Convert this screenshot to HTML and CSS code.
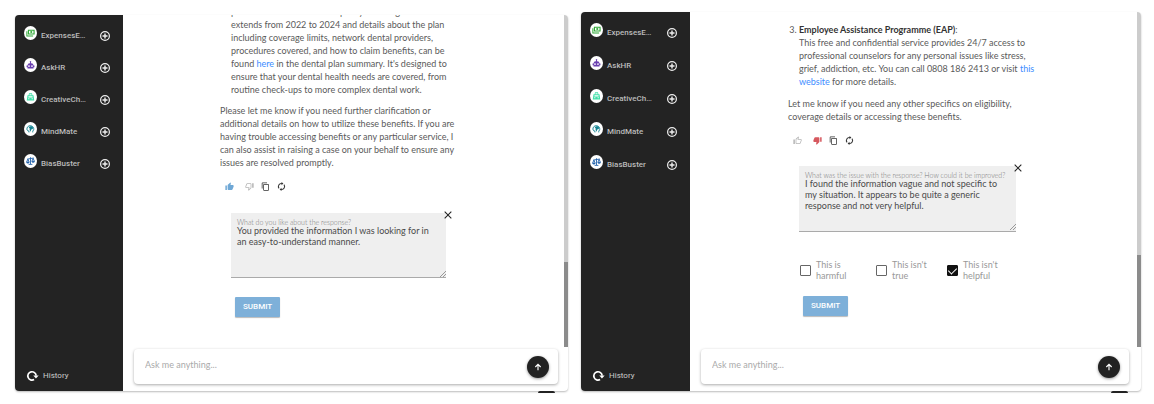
FILE: index.html
```html
<!DOCTYPE html>
<html lang="en">
<head>
<meta charset="utf-8">
<title>Assistant feedback</title>
<link rel="stylesheet" href="styles.css">
</head>
<body>
<svg class="defs" aria-hidden="true">
  <symbol id="plus" viewBox="0 0 24 24"><circle cx="12" cy="12" r="10.500" fill="none" stroke="currentColor" stroke-width="3"/><path d="M12 6v12M6 12h12" stroke="currentColor" stroke-width="3.400"/></symbol>
  <symbol id="cash" viewBox="0 0 24 24"><path fill="#2fa836" fill-rule="evenodd" d="M5 3h18v13H5zM8 6v7h12V6zM1 7h2.500v11.500H19V21H1z"/><circle cx="14" cy="9.500" r="2.800" fill="#2fa836"/></symbol>
  <symbol id="robot" viewBox="0 0 24 24"><path fill="#6a3fb0" fill-rule="evenodd" d="M12 1.500a2 2 0 0 1 1.200 3.600V7H14a6 6 0 0 1 6 6h2.500v5H20v3H4v-3H1.500v-5H4a6 6 0 0 1 6-6h.8V5.100A2 2 0 0 1 12 1.500zM8 12.500a2.400 2.400 0 1 0 0 4.800 2.400 2.400 0 0 0 0-4.800zm8 0a2.400 2.400 0 1 0 0 4.800 2.400 2.400 0 0 0 0-4.800z"/></symbol>
  <symbol id="creative" viewBox="0 0 24 24"><path fill="#3fe0a8" fill-rule="evenodd" d="M8 2h8l1 5h3l2 14H2L4 7h3zM9.500 4.500 9 7h6l-.5-2.500zM6.500 10v3h11v-3zM6 15.500V18h3v-2.500zm9 0V18h3v-2.500z"/></symbol>
  <symbol id="mind" viewBox="0 0 24 24"><path fill="none" stroke="#168492" stroke-width="2.600" d="M8 21v-3C3 17 1.500 13 3 9c1.600-5 7-7 12-5 5 2 6 6 5.500 9.500L18 18v3"/><path fill="#168492" d="M9 6l5-2 5 4-1 4-4 1-2 6-3-5 2-3-4-2z"/></symbol>
  <symbol id="scale" viewBox="0 0 24 24"><path fill="none" stroke="#2463ac" stroke-width="2.400" d="M12 2v18M7 21h10M3 7l18-3M5 7l-3.500 8h7zM19 5l-3.500 8h7z"/><path fill="#2463ac" d="M1 14.500h8a4 4 0 0 1-8 0zM15 12.500h8a4 4 0 0 1-8 0z"/></symbol>
  <symbol id="up" viewBox="0 0 24 24"><path fill="currentColor" d="M1 21h4V9H1v12zm22-11c0-1.100-.9-2-2-2h-6.310l.95-4.570.03-.32c0-.41-.17-.79-.44-1.060L14.170 1 7.590 7.590C7.220 7.950 7 8.450 7 9v10c0 1.100.9 2 2 2h9c.83 0 1.540-.5 1.840-1.220l3.020-7.050c.09-.23.14-.47.14-.73v-2z"/></symbol>
  <symbol id="up-line" viewBox="0 0 24 24"><path fill="currentColor" d="M9 21h9c.83 0 1.540-.5 1.840-1.220l3.020-7.050c.09-.23.14-.47.14-.73v-2c0-1.100-.9-2-2-2h-6.310l.95-4.570.03-.32c0-.41-.17-.79-.44-1.060L14.170 1 7.580 7.590C7.220 7.950 7 8.450 7 9v10c0 1.100.9 2 2 2zM9 9l4.340-4.340L12 10h9v2l-3 7H9V9zM1 9h4v12H1z"/></symbol>
  <symbol id="copy" viewBox="0 0 24 24"><path fill="currentColor" d="M16 1H4c-1.100 0-2 .9-2 2v14h2V3h12V1zm3 4H8c-1.100 0-2 .9-2 2v14c0 1.100.9 2 2 2h11c1.100 0 2-.9 2-2V7c0-1.100-.9-2-2-2zm0 16H8V7h11v14z"/></symbol>
  <symbol id="sync" viewBox="0 0 24 24"><path fill="none" stroke="currentColor" stroke-width="2.800" d="M5.500 17A8 8 0 0 1 13 4.100M18.500 7A8 8 0 0 1 11 19.900"/><path fill="currentColor" d="M12 0l5 4.200-5 4.300zM12 24l-5-4.200 5-4.300z"/></symbol>
  <symbol id="cross" viewBox="0 0 24 24"><path d="M2 2l20 20M22 2L2 22" stroke="currentColor" stroke-width="3.200"/></symbol>
  <symbol id="arrow" viewBox="0 0 24 24"><path d="M12 22V4M4 12L12 4 20 12" fill="none" stroke="currentColor" stroke-width="3.400"/></symbol>
  <symbol id="history" viewBox="0 0 24 24"><path d="M17 20.500A10 10 0 1 1 22 11" fill="none" stroke="currentColor" stroke-width="4"/><path d="M15 11H28l-6.500 7z" fill="currentColor"/></symbol>
</svg>

<main class="screens">
  <section class="panel panel-liked">
    <nav class="sidebar">
      <ul class="bots">
        <li class="bot"><span class="avatar"><svg><use href="#cash"/></svg></span><a class="bot-name" href="#">ExpensesE…</a><button class="add" aria-label="New ExpensesE chat"><svg><use href="#plus"/></svg></button></li>
        <li class="bot"><span class="avatar"><svg><use href="#robot"/></svg></span><a class="bot-name" href="#">AskHR</a><button class="add" aria-label="New AskHR chat"><svg><use href="#plus"/></svg></button></li>
        <li class="bot"><span class="avatar"><svg><use href="#creative"/></svg></span><a class="bot-name" href="#">CreativeCh…</a><button class="add" aria-label="New CreativeCh chat"><svg><use href="#plus"/></svg></button></li>
        <li class="bot"><span class="avatar"><svg><use href="#mind"/></svg></span><a class="bot-name" href="#">MindMate</a><button class="add" aria-label="New MindMate chat"><svg><use href="#plus"/></svg></button></li>
        <li class="bot"><span class="avatar"><svg><use href="#scale"/></svg></span><a class="bot-name" href="#">BiasBuster</a><button class="add" aria-label="New BiasBuster chat"><svg><use href="#plus"/></svg></button></li>
      </ul>
      <a class="history" href="#"><svg><use href="#history"/></svg>History</a>
    </nav>
    <div class="chat">
      <div class="viewport">
        <div class="thread">
          <p class="item">provided for all staff on the policy. Coverage<br>extends from 2022 to 2024 and details about the plan<br>including coverage limits, network dental providers,<br>procedures covered, and how to claim benefits, can be<br>found <a href="#">here</a> in the dental plan summary. It's designed to<br>ensure that your dental health needs are covered, from<br>routine check-ups to more complex dental work.</p>
          <p class="para">Please let me know if you need further clarification or<br>additional details on how to utilize these benefits. If you are<br>having trouble accessing benefits or any particular service, I<br>can also assist in raising a case on your behalf to ensure any<br>issues are resolved promptly.</p>
          <div class="actions">
            <button class="act liked" aria-label="Like"><svg><use href="#up"/></svg></button>
            <button class="act faint down" aria-label="Dislike"><svg><use href="#up-line"/></svg></button>
            <button class="act" aria-label="Copy"><svg><use href="#copy"/></svg></button>
            <button class="act" aria-label="Regenerate"><svg><use href="#sync"/></svg></button>
          </div>
          <form class="feedback">
            <div class="field">
              <label for="liked-text">What do you like about the response?</label>
              <textarea id="liked-text">You provided the information I was looking for in
an easy-to-understand manner.</textarea>
              <button type="button" class="close" aria-label="Close"><svg><use href="#cross"/></svg></button>
            </div>
            <button type="button" class="submit">SUBMIT</button>
          </form>
        </div>
        <div class="track"><div class="thumb"></div></div>
      </div>
      <form class="composer">
        <input type="text" aria-label="Message" placeholder="Ask me anything...">
        <button type="button" class="send" aria-label="Send"><svg><use href="#arrow"/></svg></button>
      </form>
    </div>
    <span class="tab"></span>
  </section>

  <section class="panel panel-disliked">
    <nav class="sidebar">
      <ul class="bots">
        <li class="bot"><span class="avatar"><svg><use href="#cash"/></svg></span><a class="bot-name" href="#">ExpensesE…</a><button class="add" aria-label="New ExpensesE chat"><svg><use href="#plus"/></svg></button></li>
        <li class="bot"><span class="avatar"><svg><use href="#robot"/></svg></span><a class="bot-name" href="#">AskHR</a><button class="add" aria-label="New AskHR chat"><svg><use href="#plus"/></svg></button></li>
        <li class="bot"><span class="avatar"><svg><use href="#creative"/></svg></span><a class="bot-name" href="#">CreativeCh…</a><button class="add" aria-label="New CreativeCh chat"><svg><use href="#plus"/></svg></button></li>
        <li class="bot"><span class="avatar"><svg><use href="#mind"/></svg></span><a class="bot-name" href="#">MindMate</a><button class="add" aria-label="New MindMate chat"><svg><use href="#plus"/></svg></button></li>
        <li class="bot"><span class="avatar"><svg><use href="#scale"/></svg></span><a class="bot-name" href="#">BiasBuster</a><button class="add" aria-label="New BiasBuster chat"><svg><use href="#plus"/></svg></button></li>
      </ul>
      <a class="history" href="#"><svg><use href="#history"/></svg>History</a>
    </nav>
    <div class="chat">
      <div class="viewport">
        <div class="thread">
          <ol class="item list" start="3"><li><strong>Employee Assistance Programme (EAP)</strong>:<br>This free and confidential service provides 24/7 access to<br>professional counselors for any personal issues like stress,<br>grief, addiction, etc. You can call 0808 186 2413 or visit <a href="#">this<br>website</a> for more details.</li></ol>
          <p class="para">Let me know if you need any other specifics on eligibility,<br>coverage details or accessing these benefits.</p>
          <div class="actions">
            <button class="act faint" aria-label="Like"><svg><use href="#up-line"/></svg></button>
            <button class="act disliked down" aria-label="Dislike"><svg><use href="#up"/></svg></button>
            <button class="act" aria-label="Copy"><svg><use href="#copy"/></svg></button>
            <button class="act" aria-label="Regenerate"><svg><use href="#sync"/></svg></button>
          </div>
          <form class="feedback">
            <div class="field">
              <label for="issue-text">What was the issue with the response? How could it be improved?</label>
              <textarea id="issue-text">I found the information vague and not specific to
my situation. It appears to be quite a generic
response and not very helpful.</textarea>
              <button type="button" class="close" aria-label="Close"><svg><use href="#cross"/></svg></button>
            </div>
            <div class="reasons">
              <label class="reason"><input type="checkbox"><span>This is<br>harmful</span></label>
              <label class="reason"><input type="checkbox"><span>This isn't<br>true</span></label>
              <label class="reason"><input type="checkbox" checked><span>This isn't<br>helpful</span></label>
            </div>
            <button type="button" class="submit">SUBMIT</button>
          </form>
        </div>
        <div class="track"><div class="thumb"></div></div>
      </div>
      <form class="composer">
        <input type="text" aria-label="Message" placeholder="Ask me anything...">
        <button type="button" class="send" aria-label="Send"><svg><use href="#arrow"/></svg></button>
      </form>
    </div>
    <span class="tab"></span>
  </section>
</main>
</body>
</html>
```
FILE: styles.css
```css
* { box-sizing: border-box; }

body {
  margin: 0;
  background: #fff;
  color: #5a5a5a;
  font: 9px/13px Lato, "Open Sans", sans-serif;
}

button { margin: 0; padding: 0; border: 0; background: none; color: inherit; }
button svg, .avatar svg, .history svg { display: block; width: 100%; height: 100%; overflow: visible; }
symbol { overflow: visible; }
a { color: #3c8cff; text-decoration: none; }
.defs { display: none; }

.screens {
  display: grid;
  grid-template-columns: 553fr 560fr;
  gap: 13px;
  min-height: 100vh;
  padding: 12px 13px 13px 15px;
}

.panel {
  position: relative;
  display: grid;
  grid-template-columns: 108px 1fr;
  background: #fff;
  border-radius: 4px;
  box-shadow: 0 1px 2px 0 #bbb;
}
.panel-liked { margin-top: 3px; }
.panel-disliked { grid-template-columns: 109px 1fr; }

.sidebar {
  display: flex;
  flex-direction: column;
  justify-content: space-between;
  padding: 11px 13px 9px 9px;
  background: #232323;
  border-radius: 4px 0 0 4px;
  color: #c4c4c4;
  font-family: Roboto, sans-serif;
}
.bots { display: grid; gap: 17px; margin: 0; padding: 0; list-style: none; }
.panel-disliked .bots { gap: 18px; }
.bot { display: flex; align-items: flex-end; height: 15px; }
.avatar { align-self: flex-start; width: 13px; height: 14px; padding: 2px; border-radius: 50%; background: #fff; }
.bot-name { flex: 1; padding-left: 4px; color: #bbb; font-size: 8px; line-height: 10px; font-weight: 500; }
.add { width: 10px; height: 10px; color: #eee; }
.history { display: flex; align-items: center; gap: 6px; padding-left: 3px; color: #ccc; font-size: 8px; }
.history svg { width: 10px; height: 10px; color: #fff; }

.chat { display: flex; flex-direction: column; min-width: 0; }
.viewport { flex: 1; display: flex; min-height: 0; }
.thread {
  flex: 1;
  display: flex;
  flex-direction: column;
  justify-content: flex-end;
  height: 332px;
  padding: 0 0 30px 97px;
  overflow: hidden;
}
.panel-disliked .thread { height: 335px; padding: 0 0 31px 98px; }
.thread > * { flex: none; }

.item { margin: 0 0 8px 11px; white-space: nowrap; }
.list { margin-bottom: 9px; padding: 0; }
.list strong { color: #333; font-weight: 700; }
.para { margin: 0 0 11px; white-space: nowrap; }

.actions { display: flex; align-items: center; gap: 7px; height: 13px; padding-left: 5px; color: #333; }
.act { width: 9px; height: 9px; }
.liked { color: #6fa8d6; }
.disliked { color: #d6585e; }
.faint { color: #b5b5b5; }
.down { margin-left: 4px; transform: rotate(180deg); }

.feedback { width: 226px; padding: 20px 0 0 11px; }
.panel-disliked .feedback { width: 228px; padding-top: 19px; }
.field {
  position: relative;
  height: 65px;
  padding-top: 6px;
  background: #efefef;
  border-bottom: 1px solid #aaa;
}
.panel-disliked .field { height: 66px; }
.field label { display: block; height: 6px; padding-left: 6px; color: #777; font-size: 7px; font-weight: 300; line-height: 7px; white-space: nowrap; }
.field textarea {
  display: block;
  width: 100%;
  height: 52px;
  padding: 0 0 0 6px;
  border: 0;
  outline: 0;
  background: none;
  color: #4a4a4a;
  font: 9px/11px Lato, sans-serif;
  white-space: pre;
  overflow: hidden;
  resize: vertical;
}
.field textarea::-webkit-resizer {
  background: linear-gradient(135deg, transparent 0 46%, #999 46% 56%, transparent 56% 72%, #999 72% 82%, transparent 82%) right bottom / 6px 6px no-repeat;
}
.close { position: absolute; top: -2px; right: -6px; width: 8px; height: 8px; color: #222; }

.reasons { display: grid; grid-template-columns: 76px 71px 1fr; padding: 27px 0 0 1px; }
.reason { display: flex; align-items: center; gap: 5px; color: #999; line-height: 11px; }
.reason input {
  appearance: none;
  width: 11px;
  height: 11px;
  margin: 0;
  border: 1px solid #666;
  border-radius: 1px;
}
.reason input:checked { border-color: #111; background: #111; }
.reason input:checked::before {
  content: "";
  display: block;
  width: 4px;
  height: 7px;
  margin: 0 auto;
  border: solid #fff;
  border-width: 0 1px 1px 0;
  transform: rotate(45deg);
}

.submit {
  display: block;
  height: 20px;
  margin: 19px 0 0 4px;
  padding: 0 8px;
  border-radius: 1px;
  background: #7eb0d9;
  box-shadow: 0 1px 1px #bbb;
  color: #fff;
  font: 500 8px/20px Roboto, sans-serif;
}
.reasons + .submit { margin-top: 15px; }

.track { display: flex; align-items: flex-end; width: 4px; background: #ccc; border-top-right-radius: 4px; }
.thumb { width: 4px; height: 85px; background: #8b8b8b; }
.panel-disliked .thumb { height: 92px; }

.composer {
  display: flex;
  align-items: center;
  margin: 2px 10px 7px 11px;
  padding: 0 9px 0 11px;
  height: 35px;
  border-radius: 4px;
  background: #fff;
  box-shadow: 0 1px 3px #aaa;
}
.panel-disliked .composer { margin-right: 12px; }
.composer input { flex: 1; min-width: 0; padding: 0 0 4px; border: 0; outline: 0; background: none; color: #555; font: 9px/13px Lato, sans-serif; }
.composer input::placeholder { color: #aaa; }
.send { width: 22px; height: 22px; padding: 7px; border-radius: 50%; background: #222; color: #fff; box-shadow: 0 1px 3px #999; }

.tab { position: absolute; right: 13px; bottom: -2px; width: 17px; height: 2px; border-radius: 2px 2px 0 0; background: #222; }
```
